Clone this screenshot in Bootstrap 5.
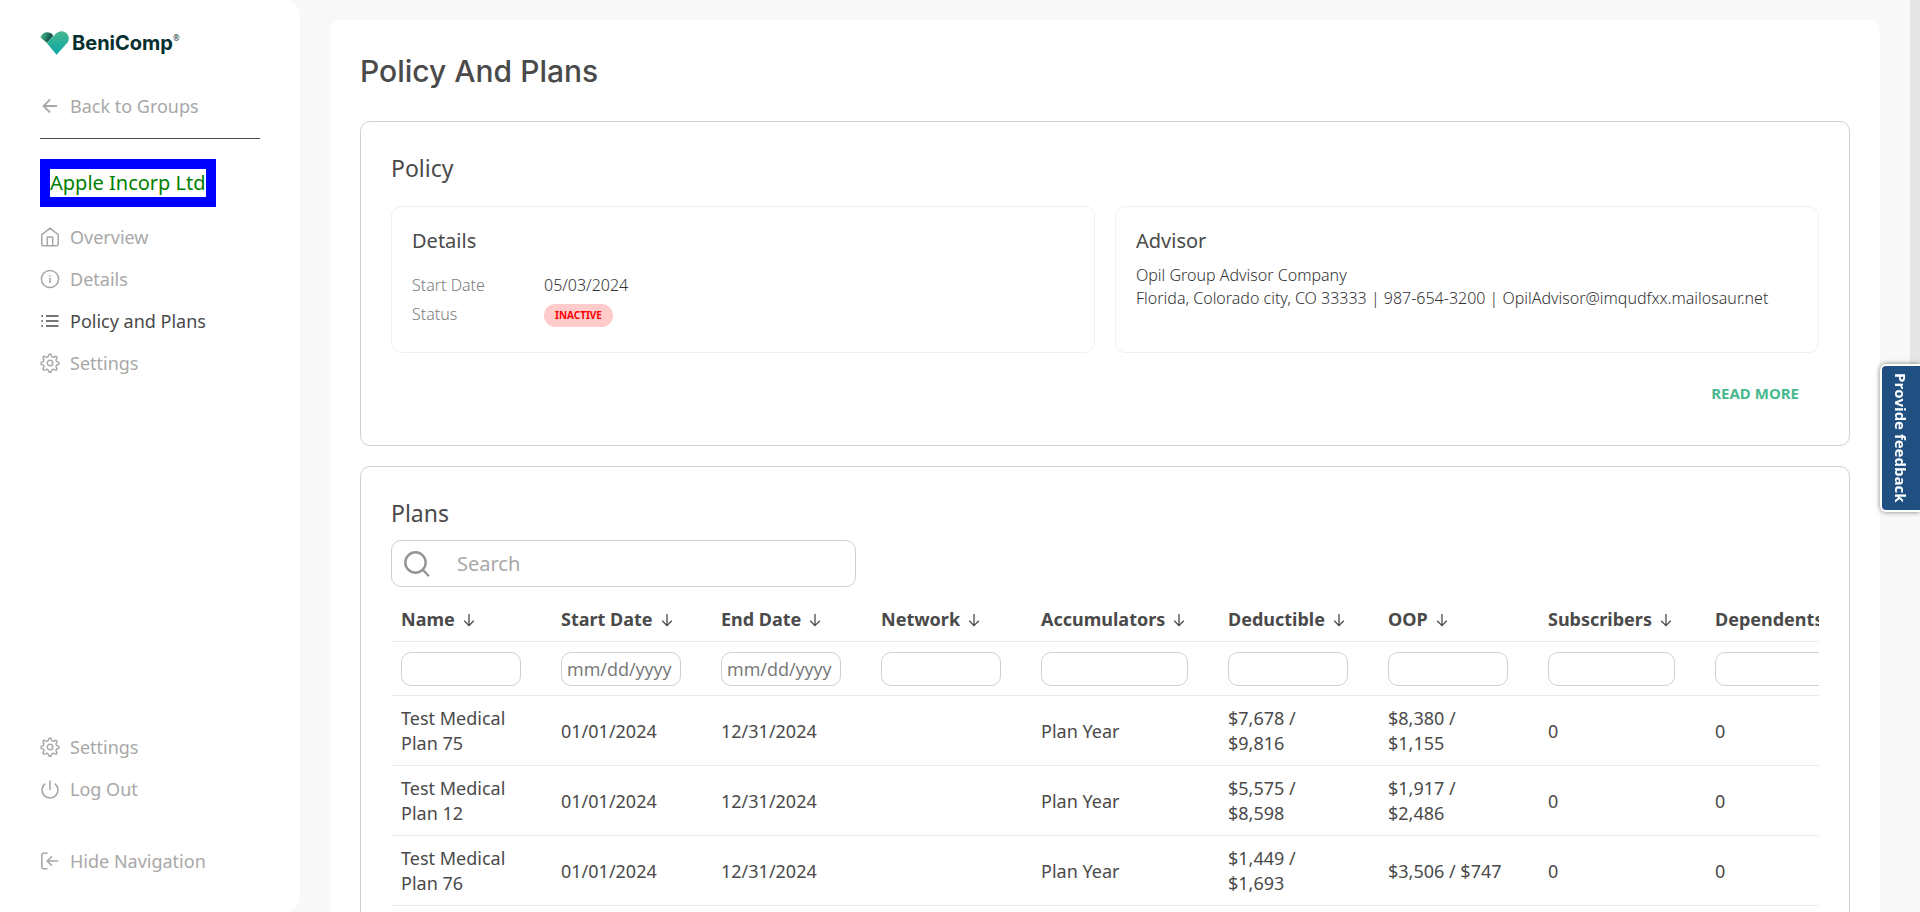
<!DOCTYPE html>
<html lang="en">
<head>
<meta charset="utf-8">
<meta name="viewport" content="width=device-width, initial-scale=1">
<title>Policy And Plans</title>
<link href="https://cdn.jsdelivr.net/npm/bootstrap@5.3.0/dist/css/bootstrap.min.css" rel="stylesheet">
<style>
  body { font-family: "Noto Sans", "Open Sans", sans-serif; font-size: 18px; line-height: 25px; color: #4a4a4a; background: #f8f8f8; }
  .shell { height: 100vh; overflow: hidden; }

  .side { width: 300px; padding: 30px 40px; border-radius: 0 16px 16px 0; }
  .brand { height: 26px; margin-bottom: 29px; color: #06302f; }
  .brand-name { font-family: Inter, sans-serif; font-weight: 700; font-size: 20px; line-height: 26px; margin-left: 2px; }
  .brand-reg { font-size: 8px; line-height: 8px; }
  .side-link { display: flex; align-items: center; gap: 10px; height: 42px; padding: 0; border: 0; background: none; color: #a8a8a8; text-decoration: none; }
  .side-link svg { width: 20px; height: 20px; flex: none; }
  .side-link.current { color: #4a4a4a; }
  .divider { border-top: 1px solid #4a4a4a; margin: 11px 0 20px; }
  .group-name { font-size: 20px; line-height: 28px; color: green; border: 10px solid blue; margin-bottom: 9px; }
  .hide-nav { margin-top: 30px; }

  .main { min-width: 0; padding: 20px 40px 20px 30px; overflow-y: auto; scrollbar-width: none; }
  .main::-webkit-scrollbar { display: none; }
  .sheet { border-radius: 10px; padding: 30px; }
  .page-title { font-family: Inter, sans-serif; font-size: 30px; line-height: 42px; font-weight: 500; margin: 0 0 29px; }
  .panel { border: 1px solid #d0d0d4; border-radius: 10px; padding: 30px; }
  .panel + .panel { margin-top: 20px; }
  .panel h2 { font-size: 23px; line-height: 32px; font-weight: 400; margin: 0; }
  .boxes { display: grid; grid-template-columns: 1fr 1fr; gap: 20px; margin-top: 22px; }
  .box { border: 1px solid #f0f0f0; border-radius: 10px; padding: 20px; min-height: 147px; font-size: 16px; line-height: 23px; font-weight: 300; color: #333; }
  .box h3 { font-size: 20px; line-height: 28px; font-weight: 400; margin: 0 0 9px; color: #4a4a4a; }
  .facts { display: grid; grid-template-columns: 132px 1fr; line-height: 29px; margin: 16px 0 0; }
  .facts dt { font-weight: 300; color: #7c7c7c; }
  .facts dd { margin: 0; }
  .pill { display: inline-block; font-size: 10px; line-height: 23px; font-weight: 700; color: red; background: #ffcbcb; border-radius: 12px; padding: 0 11px; vertical-align: top; margin-top: 4px; }
  .more { padding: 10px 20px; margin-top: 18px; font-size: 15px; line-height: 24px; font-weight: 700; color: #47b98e; text-decoration: none; }

  .search { width: 465px; height: 47px; margin: 11px 0 10px; padding: 0 12px; gap: 25px; border: 1px solid #d0d0d4; border-radius: 10px; }
  .search svg { width: 26px; height: 26px; flex: none; color: #949494; }
  .search input { border: 0; outline: 0; background: none; font-size: 20px; padding: 0 2px; }
  .search input::placeholder { color: #a8a8a8; opacity: 1; }

  .plans-scroll { overflow: hidden; }
  .plans { table-layout: fixed; width: 1498px; margin: 0; }
  .plans th, .plans td { padding: 10px 30px 9px 10px; border-bottom: 1px solid #ebebeb; vertical-align: middle; }
  .plans th { white-space: nowrap; font-weight: 700; }
  .plans input { display: block; width: 100%; height: 34px; border: 1px solid #d0d0d4; border-radius: 10px; padding: 0 5px; font-family: "Open Sans", sans-serif; }
  .plans input::placeholder { color: #757575; opacity: 1; }
  .plans th svg { width: 12px; height: 14px; margin-left: 8px; vertical-align: -1px; }

  .feedback { position: fixed; right: 0; top: 364px; z-index: 2; width: 40px; height: 148px; writing-mode: vertical-rl; font-family: "Open Sans", sans-serif; font-size: 15px; line-height: 36px; font-weight: 700; color: #fff; background: #205081; border: 2px solid #fff; border-right: 0; border-radius: 6px 0 0 6px; box-shadow: 0 0 5px rgba(0,0,0,.5); padding: 0; }
  .thumb { position: fixed; right: 0; top: 0; width: 10px; height: 400px; background: #e6e6e6; }
</style>
</head>
<body>
<svg class="d-none" aria-hidden="true">
  <symbol id="gear" viewBox="0 0 24 24"><g fill="none" stroke="currentColor" stroke-width="1.8" stroke-linejoin="round"><circle cx="12" cy="12" r="3.300"/><path d="M10.300 3.100c.4-2.400 3-2.400 3.400 0 .3 1.900 2.200 2.600 3.700 1.500 2-1.400 3.800.4 2.400 2.400-1.100 1.500-.4 3.400 1.500 3.700 2.200.4 2.200 2.900 0 3.300-1.900.4-2.600 2.100-1.500 3.700 1.400 2-.4 3.800-2.400 2.400-1.500-1.100-3.400-.4-3.700 1.500-.4 2.200-3 2.200-3.400 0-.3-1.900-2.200-2.600-3.700-1.500-2 1.400-3.800-.4-2.400-2.400 1.100-1.600.4-3.300-1.500-3.700-2.200-.4-2.200-2.900 0-3.300 1.900-.3 2.600-2.200 1.500-3.700-1.400-2 .4-3.800 2.400-2.400 1.500 1.100 3.400.4 3.700-1.500z"/></g></symbol>
  <symbol id="down" viewBox="0 0 12 14"><path d="M6 1v11.500M1.200 7.800 6 12.600l4.800-4.800" fill="none" stroke="currentColor" stroke-width="1.300"/></symbol>
</svg>

<div class="shell d-flex">
  <nav class="side bg-white d-flex flex-column flex-shrink-0" aria-label="Group navigation">
    <a class="brand d-flex align-items-center text-decoration-none" href="#">
      <svg width="30" height="26" viewBox="0 0 30 26" aria-hidden="true">
        <defs>
          <linearGradient id="leafFront" x1="0" y1="0" x2="0" y2="1"><stop offset="0" stop-color="#48b98c"/><stop offset="1" stop-color="#0aa5a8"/></linearGradient>
          <linearGradient id="leafBack" x1="0" y1="0" x2="1" y2=".3"><stop offset="0.200" stop-color="#3fae86"/><stop offset="1" stop-color="#07443f"/></linearGradient>
        </defs>
        <path d="M.5 7.500C2 2 8.500.5 12.500 4.500L13 6 7 13z" fill="url(#leafBack)"/>
        <path d="M6.800 13 16 3.500C20 .2 24 .6 26.500 3.200c3.300 3.300 3 7.300.2 10.300L16.500 24.800z" fill="url(#leafFront)"/>
      </svg>
      <span class="brand-name">BeniComp</span><span class="brand-reg align-self-start mt-1">®</span>
    </a>
    <a class="side-link" href="#"><svg viewBox="0 0 20 20"><path d="M17 10H4M10 3.500 3.500 10l6.500 6.500" fill="none" stroke="currentColor" stroke-width="1.800"/></svg>Back to Groups</a>
    <div class="divider"></div>
    <div class="group-name align-self-start">Apple Incorp Ltd</div>
    <a class="side-link" href="#"><svg viewBox="0 0 20 20"><path d="M1.800 7.600 10 1.200l8.200 6.400V17a1.800 1.800 0 0 1-1.800 1.800H3.600A1.800 1.800 0 0 1 1.800 17zM7.300 18.800V10h5.400v8.800" fill="none" stroke="currentColor" stroke-width="1.500" stroke-linejoin="round"/></svg>Overview</a>
    <a class="side-link" href="#"><svg viewBox="0 0 20 20"><circle cx="10" cy="10" r="8.600" fill="none" stroke="currentColor" stroke-width="1.500"/><path d="M10 9v5M10 6v1.600" stroke="currentColor" stroke-width="1.600"/></svg>Details</a>
    <a class="side-link current" href="#" aria-current="page"><svg viewBox="0 0 20 20"><path d="M6 5h12.500M6 10h12.500M6 15h12.500" stroke="currentColor" stroke-width="1.600"/><path d="M1.300 5h1.700M1.300 10h1.700M1.300 15h1.700" stroke="currentColor" stroke-width="1.600"/></svg>Policy and Plans</a>
    <a class="side-link" href="#"><svg><use href="#gear"/></svg>Settings</a>
    <a class="side-link mt-auto" href="#"><svg><use href="#gear"/></svg>Settings</a>
    <a class="side-link" href="#"><svg viewBox="0 0 20 20"><path d="M10 1.500v9.500M5.200 4.600a8 8 0 1 0 9.600 0" fill="none" stroke="currentColor" stroke-width="1.600"/></svg>Log Out</a>
    <button class="side-link hide-nav" type="button"><svg viewBox="0 0 20 20"><path d="M7.500 2.300H3.600a1.800 1.800 0 0 0-1.800 1.800v11.800a1.800 1.800 0 0 0 1.800 1.800h3.900M18.200 10H8M12 5.200 7.200 10l4.800 4.800" fill="none" stroke="currentColor" stroke-width="1.600"/></svg>Hide Navigation</button>
  </nav>

  <main class="main flex-grow-1">
    <div class="sheet bg-white">
      <h1 class="page-title">Policy And Plans</h1>

      <section class="panel d-flex flex-column">
        <h2>Policy</h2>
        <div class="boxes">
          <div class="box">
            <h3>Details</h3>
            <dl class="facts">
              <dt>Start Date</dt><dd>05/03/2024</dd>
              <dt>Status</dt><dd><span class="pill">INACTIVE</span></dd>
            </dl>
          </div>
          <div class="box">
            <h3>Advisor</h3>
            <div>Opil Group Advisor Company</div>
            <div>Florida, Colorado city, CO 33333 | 987-654-3200 | OpilAdvisor@imqudfxx.mailosaur.net</div>
          </div>
        </div>
        <a class="more align-self-end" href="#">READ MORE</a>
      </section>

      <section class="panel">
        <h2>Plans</h2>
        <label class="search d-flex align-items-center">
          <svg viewBox="0 0 26 26" aria-hidden="true"><circle cx="11.500" cy="11.500" r="10.200" fill="none" stroke="currentColor" stroke-width="2.400"/><path d="M18.500 18.500l5.800 6" stroke="currentColor" stroke-width="2.400" stroke-linecap="round"/></svg>
          <input class="flex-grow-1" type="search" placeholder="Search" aria-label="Search plans">
        </label>
        <div class="plans-scroll">
          <table class="plans">
            <colgroup><col style="width:160px"><col style="width:160px"><col style="width:160px"><col style="width:160px"><col style="width:187px"><col style="width:160px"><col style="width:160px"><col style="width:167px"><col style="width:184px"></colgroup>
            <thead>
              <tr>
                <th>Name<svg><use href="#down"/></svg></th>
                <th>Start Date<svg><use href="#down"/></svg></th>
                <th>End Date<svg><use href="#down"/></svg></th>
                <th>Network<svg><use href="#down"/></svg></th>
                <th>Accumulators<svg><use href="#down"/></svg></th>
                <th>Deductible<svg><use href="#down"/></svg></th>
                <th>OOP<svg><use href="#down"/></svg></th>
                <th>Subscribers<svg><use href="#down"/></svg></th>
                <th>Dependents<svg><use href="#down"/></svg></th>
              </tr>
              <tr>
                <td><input type="text" aria-label="Filter name"></td>
                <td><input type="text" placeholder="mm/dd/yyyy" aria-label="Filter start date"></td>
                <td><input type="text" placeholder="mm/dd/yyyy" aria-label="Filter end date"></td>
                <td><input type="text" aria-label="Filter network"></td>
                <td><input type="text" aria-label="Filter accumulators"></td>
                <td><input type="text" aria-label="Filter deductible"></td>
                <td><input type="text" aria-label="Filter OOP"></td>
                <td><input type="text" aria-label="Filter subscribers"></td>
                <td><input type="text" aria-label="Filter dependents"></td>
              </tr>
            </thead>
            <tbody>
              <tr><td>Test Medical Plan 75</td><td>01/01/2024</td><td>12/31/2024</td><td></td><td>Plan Year</td><td>$7,678 / $9,816</td><td>$8,380 / $1,155</td><td>0</td><td>0</td></tr>
              <tr><td>Test Medical Plan 12</td><td>01/01/2024</td><td>12/31/2024</td><td></td><td>Plan Year</td><td>$5,575 / $8,598</td><td>$1,917 / $2,486</td><td>0</td><td>0</td></tr>
              <tr><td>Test Medical Plan 76</td><td>01/01/2024</td><td>12/31/2024</td><td></td><td>Plan Year</td><td>$1,449 / $1,693</td><td>$3,506 / $747</td><td>0</td><td>0</td></tr>
            </tbody>
          </table>
        </div>
      </section>
    </div>
  </main>
</div>
<div class="thumb"></div>
<button class="feedback" type="button">Provide feedback</button>
<script src="https://cdn.jsdelivr.net/npm/bootstrap@5.3.0/dist/js/bootstrap.bundle.min.js"></script>
</body>
</html>
